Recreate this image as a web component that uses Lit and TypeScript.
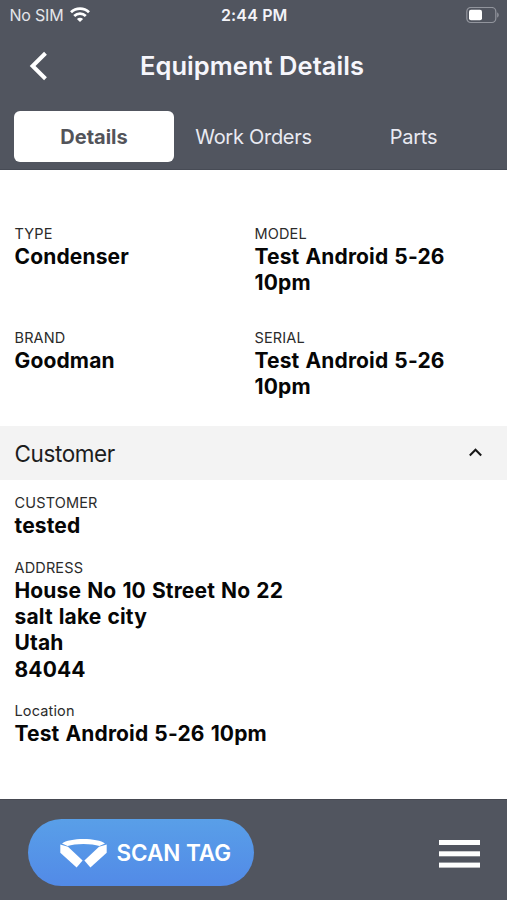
import { LitElement, html, css } from "lit";
import { customElement, property } from "lit/decorators.js";

@customElement("info-field")
class InfoField extends LitElement {
  @property() label = "";
  @property({ type: Array }) lines: string[] = [];

  static styles = css`
    :host { display: block; }
    .label { font-size: 14.5px; line-height: 18px; color: #2b2b2b; letter-spacing: 0.15px; }
    .value { font-size: 21px; line-height: 26.3px; font-weight: 700; color: #060606; white-space: nowrap; letter-spacing: 0.15px; word-spacing: 0.9px; }
    .values { padding-top: 1px; margin-bottom: -1px; }
  `;

  render() {
    return html`
      <div class="label">${this.label}</div>
      <div class="values">${this.lines.map((l) => html`<div class="value">${l}</div>`)}</div>
    `;
  }
}

@customElement("app-root")
class AppRoot extends LitElement {
  static styles = css`
    :host {
      display: flex; flex-direction: column; width: 507px; height: 900px; overflow: hidden;
      background: #fff; font-family: Inter, "Liberation Sans", sans-serif;
    }
    svg { display: block; }
    header { height: 170px; flex: none; background: #51555f; color: #fff; box-sizing: border-box; border-bottom: 1px solid #474b55; }
    .status { display: grid; grid-template-columns: 1fr auto 1fr; align-items: center; height: 30px; padding: 0 8px 0 9.5px; }
    .carrier { display: flex; align-items: center; gap: 7px; font-size: 16px; color: #e4e5ea; letter-spacing: -0.2px; }
    .time { font-size: 16px; font-weight: 600; color: #f3f3f8; letter-spacing: 0.15px; }
    .battery { justify-self: end; }
    .nav { display: grid; grid-template-columns: 62px 1fr 62px; align-items: center; height: 72px; }
    .back { padding-left: 29px; }
    h1 { margin: 0; padding-right: 3px; text-align: center; font-size: 25.5px; line-height: 30px; font-weight: 600; color: #f6f6fc; letter-spacing: 0.05px; }
    .tabs { display: grid; grid-template-columns: repeat(3, 160px); padding: 9px 14px 0; height: 51px; }
    .tab { display: flex; align-items: center; justify-content: center; font-size: 20px; color: #e9eaf2; border-radius: 6px; letter-spacing: -0.28px; padding-right: 1px; }
    .tab.active { background: #fff; color: #53545a; font-weight: 700; letter-spacing: 0; padding-right: 0; }
    .summary { display: grid; grid-template-columns: 240px 1fr; row-gap: 33.4px; padding: 55px 14.5px 0; height: 201px; align-content: start; }
    .section { flex: none; display: flex; align-items: center; justify-content: space-between; height: 54px; box-sizing: border-box; padding: 0 25px 0 14.5px; background: #f3f3f3; color: #1d1d1d; font-size: 22.5px; letter-spacing: -0.4px; }
    .customer { flex: 1; display: flex; flex-direction: column; gap: 20.5px; padding: 14px 14.5px 0; }
    footer { flex: none; height: 101px; box-sizing: border-box; border-top: 1px solid #464951; background: #51555f; display: flex; align-items: center; justify-content: space-between; padding: 6px 27px 0 28px; }
    .scan { display: flex; align-items: center; gap: 9.5px; width: 226px; height: 67px; margin-bottom: 1px; box-sizing: border-box; padding-left: 32px; border-radius: 34px; background: linear-gradient(#599fe8, #528ae7); color: #fff; font-size: 22.5px; font-weight: 600; letter-spacing: -0.05px; white-space: nowrap; }
    .menu { margin-top: 1px; }
  `;

  render() {
    return html`
      <header>
        <div class="status">
          <div class="carrier">
            <span>No SIM</span>
            <svg width="20" height="16" viewBox="0 0 20 16" fill="none" stroke="#fff" stroke-width="2.8">
              <path d="M1 5.3C6 .5 14 .5 19 5.3" />
              <path d="M4.2 9C7.5 5.9 12.5 5.9 15.8 9" />
              <path d="M10 15L6.9 11.9C8.6 10.2 11.4 10.2 13.1 11.9Z" fill="#fff" stroke="none" />
            </svg>
          </div>
          <div class="time">2:44 PM</div>
          <svg class="battery" width="33" height="17" viewBox="0 0 33 17">
            <rect x=".8" y=".5" width="29" height="15" rx="4" fill="none" stroke="#92959d" stroke-width="1.2" />
            <rect x="3" y="2.7" width="13" height="10.6" rx="2" fill="#fff" />
            <path d="M31.2 5.5v5c2-.6 2-4.4 0-5z" fill="#92959d" />
          </svg>
        </div>
        <div class="nav">
          <svg class="back" width="20" height="30" viewBox="0 0 20 30" fill="none" stroke="#fff" stroke-width="4">
            <path d="M16.5 2.3L3.6 15L16.5 27.7" />
          </svg>
          <h1>Equipment Details</h1>
        </div>
        <div class="tabs">
          <div class="tab active">Details</div>
          <div class="tab">Work Orders</div>
          <div class="tab">Parts</div>
        </div>
      </header>
      <div class="summary">
        <info-field label="TYPE" .lines=${["Condenser"]}></info-field>
        <info-field label="MODEL" .lines=${["Test Android 5-26", "10pm"]}></info-field>
        <info-field label="BRAND" .lines=${["Goodman"]}></info-field>
        <info-field label="SERIAL" .lines=${["Test Android 5-26", "10pm"]}></info-field>
      </div>
      <div class="section">
        <span>Customer</span>
        <svg width="13" height="11" viewBox="0 0 13 11" fill="none" stroke="#161616" stroke-width="2">
          <path d="M.8 7.5L6.5 1.7L12.2 7.5" />
        </svg>
      </div>
      <div class="customer">
        <info-field label="CUSTOMER" .lines=${["tested"]}></info-field>
        <info-field label="ADDRESS" .lines=${["House No 10 Street No 22", "salt lake city", "Utah", "84044"]}></info-field>
        <info-field label="Location" .lines=${["Test Android 5-26 10pm"]}></info-field>
      </div>
      <footer>
        <div class="scan">
          <svg width="47" height="30" viewBox="0 0 47 30" fill="#fff">
            <path d="M2 5.4C9-.6 38-.6 45 5.4L39.4 7.9C32 5.2 15 5.2 7.6 7.9Z" />
            <path d="M.3 6.4L8 8.8L22.6 22.4L16.6 29.4L.3 14.8Z" />
            <path d="M46.7 6.4L39 8.8L24.4 22.4L30.4 29.4L46.7 14.8Z" />
          </svg>
          <span>SCAN TAG</span>
        </div>
        <svg class="menu" width="41" height="28" viewBox="0 0 41 28" fill="#fff">
          <rect width="41" height="5" /><rect y="11.3" width="41" height="5" /><rect y="22.6" width="41" height="5" />
        </svg>
      </footer>
    `;
  }
}
